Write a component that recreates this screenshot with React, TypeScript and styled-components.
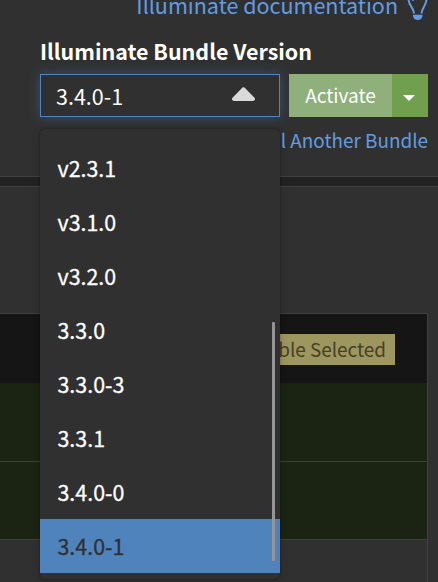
import React from 'react';
import styled, { createGlobalStyle } from 'styled-components';

const GlobalStyle = createGlobalStyle`
  * { box-sizing: border-box; }
  html, body { margin: 0; background: #303030; overflow: hidden; }
  body { font-family: "Noto Sans CJK SC", "Noto Sans", sans-serif; color: #fff; }
`;

const Page = styled.div`
  width: 438px;
  height: 582px;
  overflow: hidden;
  background: #222;
  display: flex;
  flex-direction: column;
  gap: 9px;
`;

const BundlePanel = styled.section`
  flex: none;
  height: 177px;
  padding: 0 10px 0 40px;
  background: #303030;
  border-bottom: 1px solid #404040;
  display: flex;
  flex-direction: column;
`;

const DocRow = styled.div`
  height: 37px;
  display: flex;
  justify-content: flex-end;
`;

const DocLink = styled.a`
  color: #629de2;
  font-size: 21.5px;
  line-height: 32px;
  white-space: nowrap;
  margin-top: -11px;
`;

const BulbIcon = styled.svg`
  flex: none;
  width: 22px;
  height: 32px;
  margin: -12px 0 0 8px;
`;

const Label = styled.label`
  height: 37px;
  font-size: 21.45px;
  font-weight: 700;
  line-height: 28px;
  white-space: nowrap;
`;

const Controls = styled.div`
  height: 43px;
  display: flex;
  gap: 9px;
`;

const SelectWrap = styled.div`
  position: relative;
  width: 240px;
`;

const SelectBox = styled.div`
  height: 43px;
  padding: 0 24px 0 15px;
  border: 1px solid #4f85c4;
  box-shadow: 0 0 12px rgba(80, 133, 190, 0.4);
  display: flex;
  align-items: center;
  justify-content: space-between;
  font-size: 21.5px;
`;

const Arrow = styled.svg`
  width: 23px;
  height: 14px;
  margin-bottom: 4px;
`;

const Menu = styled.ul`
  position: absolute;
  z-index: 2;
  top: 55px;
  left: 0;
  width: 240px;
  height: 450px;
  margin: 0;
  padding: 12px 0 6px;
  list-style: none;
  background: #303030;
  border-radius: 6px;
  box-shadow: 0 0 3px rgba(0, 0, 0, 0.32), 0 1px 10px rgba(0, 0, 0, 0.14);
`;

const Option = styled.li<{ $selected?: boolean }>`
  height: 54px;
  padding-left: 17.5px;
  font-size: 21.4px;
  line-height: 54px;
  -webkit-text-stroke: 0.3px currentColor;
  background: ${(p) => (p.$selected ? '#4f83bc' : 'transparent')};
  color: ${(p) => (p.$selected ? '#303030' : '#fff')};
`;

const ScrollThumb = styled.div`
  position: absolute;
  top: 193px;
  right: 5px;
  width: 3px;
  height: 239px;
  border-radius: 1px;
  background: #959595;
`;

const SplitButton = styled.div`
  display: flex;
  font-size: 19px;
`;

const Activate = styled.div`
  width: 103px;
  background: #8fb07b;
  line-height: 42px;
  text-align: center;
`;

const Toggle = styled.div`
  width: 36px;
  background: #709f4d;
  display: flex;
  align-items: center;
  justify-content: center;
  padding: 5px 2px 0 0;
`;

const InstallLink = styled.a`
  align-self: flex-end;
  margin-top: 8px;
  color: #629de2;
  font-size: 18.9px;
  line-height: 30px;
  white-space: nowrap;
`;

const ListPanel = styled.section`
  flex: 1;
  padding: 126px 10px 0 0;
  background: #303030;
  border-top: 1px solid #404040;
`;

const Table = styled.div`
  height: 280px;
  border: solid #404040;
  border-width: 1px 1px 0 0;
`;

const TableHead = styled.div`
  height: 69px;
  padding: 20px 32px 0 0;
  background: #151515;
  display: flex;
  justify-content: flex-end;
`;

const DisableButton = styled.div`
  height: 31px;
  padding: 0 9px;
  background: #9e965f;
  color: #454126;
  font-size: 18.9px;
  line-height: 29px;
  white-space: nowrap;
`;

const TableRow = styled.div<{ $height: number }>`
  height: ${(p) => p.$height}px;
  background: #1b2413;
  border-bottom: 1px solid #404040;
`;

const versions = ['v2.3.1', 'v3.1.0', 'v3.2.0', '3.3.0', '3.3.0-3', '3.3.1', '3.4.0-0', '3.4.0-1'];
const current = '3.4.0-1';

export default function App() {
  return (
    <Page>
      <GlobalStyle />
      <BundlePanel>
        <DocRow>
          <DocLink>Illuminate documentation</DocLink>
          <BulbIcon viewBox="0 0 22 32">
            <path
              d="M8 25.500C8 20 2.500 17.500 2.500 11a9 9 0 0 1 18 0C20.500 17.500 15.500 20 15.500 25.500"
              fill="none" stroke="#629de2" strokeWidth="2"
            />
            <path d="M7 13a4.500 4.500 0 0 1 4.500-4.500" fill="none" stroke="#629de2" strokeWidth="1.500" />
            <path d="M7 26.700h9.500v1.300a4.750 4 0 0 1-9.500 0z" fill="#629de2" />
          </BulbIcon>
        </DocRow>
        <Label>Illuminate Bundle Version</Label>
        <Controls>
          <SelectWrap>
            <SelectBox>
              <span>{current}</span>
              <Arrow viewBox="0 0 23 14">
                <path d="M10.500.600Q11.500-.2 12.500.600L22.500 10.700Q24 13.500 21 14H2Q-1 13.500.500 10.700Z" fill="#d9d9d9" />
              </Arrow>
            </SelectBox>
            <Menu>
              {versions.map((v) => (
                <Option key={v} $selected={v === current}>{v}</Option>
              ))}
              <ScrollThumb />
            </Menu>
          </SelectWrap>
          <SplitButton>
            <Activate>Activate</Activate>
            <Toggle>
              <svg width="12" height="6" viewBox="0 0 12 6"><path d="M0 0h12L6 6z" fill="#fff" /></svg>
            </Toggle>
          </SplitButton>
        </Controls>
        <InstallLink>Install Another Bundle</InstallLink>
      </BundlePanel>
      <ListPanel>
        <Table>
          <TableHead>
            <DisableButton>Disable Selected</DisableButton>
          </TableHead>
          <TableRow $height={79} />
          <TableRow $height={78} />
        </Table>
      </ListPanel>
    </Page>
  );
}
